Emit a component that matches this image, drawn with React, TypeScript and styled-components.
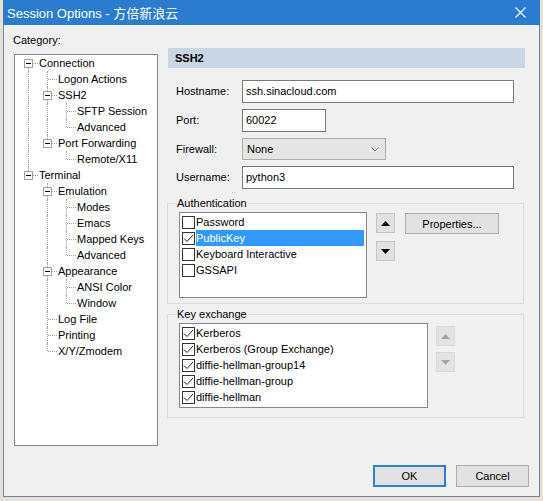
import React from 'react';
import styled, { createGlobalStyle } from 'styled-components';

const GlobalStyle = createGlobalStyle`
  html, body { margin: 0; padding: 0; }
  body {
    background: #e9e0cf;
    font-family: "Liberation Sans", Arial, "Noto Sans CJK SC", sans-serif;
    font-size: 11px;
    color: #000;
  }
  * { box-sizing: border-box; }
`;

const Screen = styled.div`
  width: 543px;
  height: 501px;
  padding: 0 3px;
  overflow: hidden;
`;

const Window = styled.div`
  width: 537px;
  height: 497px;
  display: flex;
  flex-direction: column;
  border: 1px solid #5f84b3;
  border-top: none;
  background: #f0f0f0;
`;

const TitleBar = styled.div`
  height: 25px;
  margin: 0 -1px;
  background: #2b7bd0;
  color: #fff;
  display: flex;
  align-items: center;
  padding: 0 10px 0 4px;
  font-family: "Liberation Sans", Arial, "Noto Sans CJK SC", sans-serif;
  font-size: 13px;
`;

const TitleText = styled.div`
  flex: 1;
  white-space: nowrap;
`;

const CloseIcon = styled.svg`
  width: 11px;
  height: 11px;
  margin-right: 4px;
`;

const Client = styled.div`
  flex: 1;
  display: flex;
  flex-direction: column;
  padding: 9px 10px 9px 10px;
`;

const Body = styled.div`
  display: flex;
  gap: 10px;
`;

const LeftCol = styled.div`
  width: 144px;
  display: flex;
  flex-direction: column;
`;

const SmallLabel = styled.div`
  line-height: 13px;
  height: 13px;
  padding-left: 0;
  margin-left: -1px;
`;

const TreeBox = styled.div`
  margin-top: 7px;
  height: 392px;
  background: #fff;
  border: 1px solid #828790;
  padding: 0 0 0 4px;
`;

const TreeRow = styled.div`
  display: flex;
  height: 16px;
`;

const Guide = styled.div<{ $line: boolean }>`
  width: 19px;
  flex: none;
  position: relative;
  &::before {
    content: '';
    display: ${(p) => (p.$line ? 'block' : 'none')};
    position: absolute;
    left: 9px;
    top: 0;
    bottom: 0;
    border-left: 1px dotted #a0a0a0;
  }
`;

const Connector = styled.div<{ $up: boolean; $down: boolean }>`
  width: 19px;
  flex: none;
  position: relative;
  &::before {
    content: '';
    position: absolute;
    left: 9px;
    top: ${(p) => (p.$up ? '0' : '8px')};
    bottom: ${(p) => (p.$down ? '0' : '8px')};
    border-left: 1px dotted #a0a0a0;
  }
  &::after {
    content: '';
    position: absolute;
    left: 10px;
    right: 0;
    top: 8px;
    border-top: 1px dotted #a0a0a0;
  }
`;

const Expander = styled.span`
  position: absolute;
  z-index: 1;
  left: 5px;
  top: 4px;
  width: 9px;
  height: 9px;
  background: #fff;
  border: 1px solid #a0a0a0;
  &::after {
    content: '';
    position: absolute;
    left: 1px;
    top: 3px;
    width: 5px;
    height: 1px;
    background: #000;
  }
`;

const TreeText = styled.span`
  line-height: 16px;
  padding-left: 1px;
  white-space: nowrap;
`;

const RightPanel = styled.div`
  width: 357px;
  margin-top: 14px;
  display: flex;
  flex-direction: column;
`;

const Header = styled.div`
  height: 20px;
  line-height: 20px;
  background: #c9d6e3;
  font-weight: bold;
  padding-left: 7px;
`;

const Form = styled.div`
  display: grid;
  grid-template-columns: 66px auto;
  row-gap: 6px;
  margin-top: 12px;
  padding-left: 8px;
  align-items: center;
`;

const FieldLabel = styled.div`
  line-height: 13px;
`;

const TextBox = styled.div<{ $w: number }>`
  width: ${(p) => p.$w}px;
  height: 23px;
  line-height: 21px;
  background: #fff;
  border: 1px solid #7a7a7a;
  padding-left: 3px;
`;

const Select = styled.div`
  width: 144px;
  height: 22px;
  background: #e5e5e5;
  border: 1px solid #acacac;
  display: flex;
  align-items: center;
  justify-content: space-between;
  padding: 0 6px 0 4px;
`;

const Group = styled.fieldset<{ $mt: number }>`
  margin: ${(p) => p.$mt}px 1px 0 -1px;
  padding: 0;
  border: 1px solid #dcdcdc;
  min-inline-size: 0;
`;

const Legend = styled.legend`
  margin-left: 8px;
  padding: 0 1px;
  line-height: 13px;
  font-size: 11px;
`;

const GroupInner = styled.div<{ $pb: number }>`
  display: flex;
  align-items: flex-start;
  padding: 2px 0 ${(p) => p.$pb}px 11px;
`;

const ListBox = styled.div<{ $w: number; $h: number }>`
  width: ${(p) => p.$w}px;
  height: ${(p) => p.$h}px;
  background: #fff;
  border: 1px solid #828790;
  padding: 1px 2px 0 2px;
`;

const ListItem = styled.div`
  display: flex;
  align-items: center;
  height: 16px;
`;

const CheckBox = styled.span`
  width: 13px;
  height: 13px;
  flex: none;
  border: 1px solid #333;
  background: #fff;
  display: flex;
  align-items: center;
  justify-content: center;
`;

const ItemText = styled.span<{ $sel?: boolean }>`
  flex: 1;
  margin-left: 1px;
  line-height: 16px;
  white-space: nowrap;
  background: ${(p) => (p.$sel ? '#3399ff' : 'transparent')};
  color: ${(p) => (p.$sel ? '#fff' : '#000')};
`;

const ArrowCol = styled.div<{ $ml: number; $gap: number; $mt: number }>`
  display: flex;
  flex-direction: column;
  gap: ${(p) => p.$gap}px;
  margin-left: ${(p) => p.$ml}px;
  margin-top: ${(p) => p.$mt}px;
`;

const ArrowButton = styled.div<{ $disabled?: boolean }>`
  width: 19px;
  height: 20px;
  display: flex;
  align-items: center;
  justify-content: center;
  background: ${(p) => (p.$disabled ? '#e3e3e3' : '#e1e1e1')};
  border: 1px solid ${(p) => (p.$disabled ? '#dadada' : '#c4c4c4')};
  color: ${(p) => (p.$disabled ? '#a6a6a6' : '#000')};
`;

const PushButton = styled.div<{ $w: number; $h: number; $default?: boolean }>`
  width: ${(p) => p.$w}px;
  height: ${(p) => p.$h}px;
  display: flex;
  align-items: center;
  justify-content: center;
  background: #e1e1e1;
  border: ${(p) => (p.$default ? '2px solid #2f7fd0' : '1px solid #adadad')};
`;

const PropsButton = styled(PushButton)`
  margin-left: 10px;
  margin-top: 1px;
`;

const ButtonRow = styled.div`
  margin-top: auto;
  display: flex;
  justify-content: flex-end;
  gap: 10px;
`;

type Node = { label: string; children?: Node[] };

const tree: Node[] = [
  {
    label: 'Connection',
    children: [
      { label: 'Logon Actions' },
      { label: 'SSH2', children: [{ label: 'SFTP Session' }, { label: 'Advanced' }] },
      { label: 'Port Forwarding', children: [{ label: 'Remote/X11' }] },
    ],
  },
  {
    label: 'Terminal',
    children: [
      {
        label: 'Emulation',
        children: [{ label: 'Modes' }, { label: 'Emacs' }, { label: 'Mapped Keys' }, { label: 'Advanced' }],
      },
      { label: 'Appearance', children: [{ label: 'ANSI Color' }, { label: 'Window' }] },
      { label: 'Log File' },
      { label: 'Printing' },
      { label: 'X/Y/Zmodem' },
    ],
  },
];

type Flat = { label: string; guides: boolean[]; up: boolean; down: boolean; box: boolean };

function flatten(nodes: Node[], guides: boolean[], root: boolean): Flat[] {
  const out: Flat[] = [];
  nodes.forEach((n, i) => {
    const hasNext = i < nodes.length - 1;
    out.push({
      label: n.label,
      guides,
      up: !(root && i === 0),
      down: hasNext,
      box: !!n.children,
    });
    if (n.children) out.push(...flatten(n.children, [...guides, hasNext], false));
  });
  return out;
}

const rows = flatten(tree, [], true);

const Check = () => (
  <svg width="11" height="11" viewBox="0 0 11 11">
    <polyline points="1,5.5 4,8.5 10,2" fill="none" stroke="#222" strokeWidth="1" />
  </svg>
);

const Tri = ({ down }: { down?: boolean }) => (
  <svg width="9" height="5" viewBox="0 0 9 5">
    <polygon points={down ? '0,0 9,0 4.5,5' : '0,5 9,5 4.5,0'} fill="currentColor" />
  </svg>
);

const auth = [
  { label: 'Password', checked: false },
  { label: 'PublicKey', checked: true, sel: true },
  { label: 'Keyboard Interactive', checked: false },
  { label: 'GSSAPI', checked: false },
];

const kex = ['Kerberos', 'Kerberos (Group Exchange)', 'diffie-hellman-group14', 'diffie-hellman-group', 'diffie-hellman'];

export default function App() {
  return (
    <Screen>
      <GlobalStyle />
      <Window>
        <TitleBar>
          <TitleText>Session Options - 方倍新浪云</TitleText>
          <CloseIcon viewBox="0 0 11 11">
            <path d="M0.5 0.5 L10.5 10.5 M10.5 0.5 L0.5 10.5" stroke="#fff" strokeWidth="1.1" />
          </CloseIcon>
        </TitleBar>
        <Client>
          <Body>
            <LeftCol>
              <SmallLabel>Category:</SmallLabel>
              <TreeBox>
                {rows.map((r, i) => (
                  <TreeRow key={i}>
                    {r.guides.map((g, k) => (
                      <Guide key={k} $line={g} />
                    ))}
                    <Connector $up={r.up} $down={r.down}>
                      {r.box && <Expander />}
                    </Connector>
                    <TreeText>{r.label}</TreeText>
                  </TreeRow>
                ))}
              </TreeBox>
            </LeftCol>
            <RightPanel>
              <Header>SSH2</Header>
              <Form>
                <FieldLabel>Hostname:</FieldLabel>
                <TextBox $w={272}>ssh.sinacloud.com</TextBox>
                <FieldLabel>Port:</FieldLabel>
                <TextBox $w={84}>60022</TextBox>
                <FieldLabel>Firewall:</FieldLabel>
                <Select>
                  <span>None</span>
                  <svg width="8" height="5" viewBox="0 0 8 5">
                    <polyline points="0.5,0.5 4,4 7.5,0.5" fill="none" stroke="#777" strokeWidth="1" />
                  </svg>
                </Select>
                <FieldLabel>Username:</FieldLabel>
                <TextBox $w={272}>python3</TextBox>
              </Form>
              <Group $mt={8}>
                <Legend>Authentication</Legend>
                <GroupInner $pb={5}>
                  <ListBox $w={188} $h={86}>
                    {auth.map((a) => (
                      <ListItem key={a.label}>
                        <CheckBox>{a.checked && <Check />}</CheckBox>
                        <ItemText $sel={a.sel}>{a.label}</ItemText>
                      </ListItem>
                    ))}
                  </ListBox>
                  <ArrowCol $ml={9} $gap={8} $mt={1}>
                    <ArrowButton>
                      <Tri />
                    </ArrowButton>
                    <ArrowButton>
                      <Tri down />
                    </ArrowButton>
                  </ArrowCol>
                  <PropsButton $w={94} $h={21}>Properties...</PropsButton>
                </GroupInner>
              </Group>
              <Group $mt={4}>
                <Legend>Key exchange</Legend>
                <GroupInner $pb={9}>
                  <ListBox $w={249} $h={85}>
                    {kex.map((k) => (
                      <ListItem key={k}>
                        <CheckBox>
                          <Check />
                        </CheckBox>
                        <ItemText>{k}</ItemText>
                      </ListItem>
                    ))}
                  </ListBox>
                  <ArrowCol $ml={8} $gap={6} $mt={3}>
                    <ArrowButton $disabled>
                      <Tri />
                    </ArrowButton>
                    <ArrowButton $disabled>
                      <Tri down />
                    </ArrowButton>
                  </ArrowCol>
                </GroupInner>
              </Group>
            </RightPanel>
          </Body>
          <ButtonRow>
            <PushButton $w={73} $h={22} $default>
              OK
            </PushButton>
            <PushButton $w={73} $h={22}>
              Cancel
            </PushButton>
          </ButtonRow>
        </Client>
      </Window>
    </Screen>
  );
}
